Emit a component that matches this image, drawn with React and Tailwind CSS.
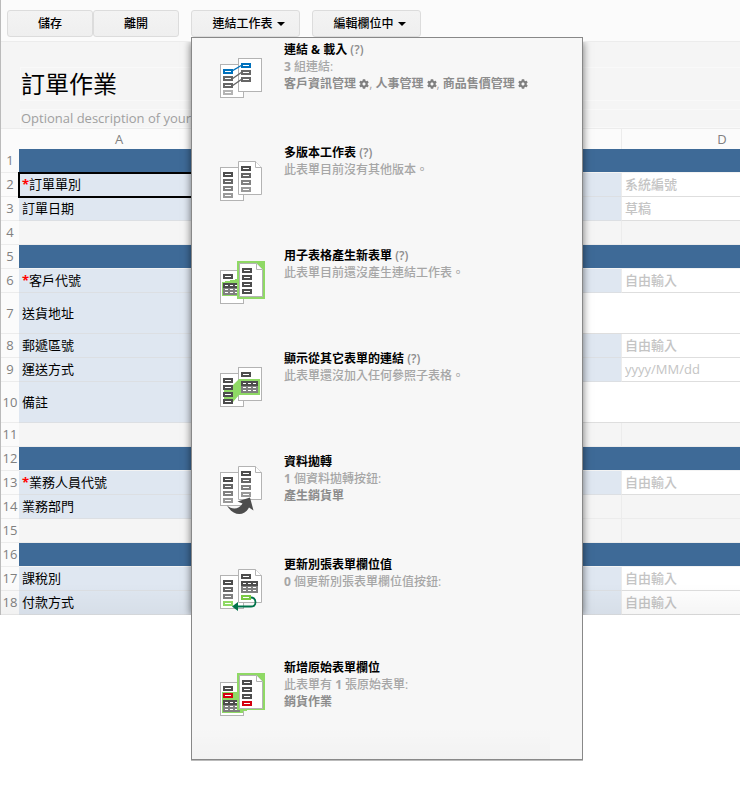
import React from "react";
import { FaCog } from "react-icons/fa";

const SHADES = ["#4d4d4d", "#666666", "#808080", "#999999"];
const BLUE = "#0071bc";
const GREEN = "#8fd965";
const DARK_GREEN = "#00734a";
const RED = "#d4000f";

/* ---------- icon building blocks ---------- */

function Page({ x, y, h = 34, fold = false }) {
  const r = x + 23.5;
  const b = y + h - 0.5;
  const l = x + 0.5;
  const t = y + 0.5;
  if (!fold) {
    return <rect x={l} y={t} width="23" height={h - 1} fill="#fff" stroke="#b3b3b3" />;
  }
  return (
    <g fill="#fff" stroke="#b3b3b3" shapeRendering="geometricPrecision">
      <path d={`M${l} ${t}H${r - 6}L${r} ${t + 6}V${b}H${l}Z`} />
      <path d={`M${r - 6} ${t}V${t + 6}H${r}`} />
    </g>
  );
}

function Bar({ x, y, color = "#4d4d4d" }) {
  return (
    <g>
      <rect x={x} y={y} width="10" height="5" fill={color} />
      <rect x={x + 2} y={y + 2} width="6" height="1" fill="#fff" />
    </g>
  );
}

function Bars({ x, y, colors }) {
  return colors.map((color, i) => <Bar key={i} x={x} y={y + i * 7} color={color} />);
}

function Grid({ x, y }) {
  return (
    <g>
      <rect x={x} y={y} width="17" height="5" fill="#4d4d4d" />
      <rect x={x} y={y + 5} width="17" height="7" fill="#808080" />
      {[2, 6, 9].map((dy) =>
        [2, 7, 12].map((dx) => (
          <rect key={`${dx}-${dy}`} x={x + dx} y={y + dy} width="3" height="1" fill="#fff" />
        ))
      )}
    </g>
  );
}

function IconFrame({ children }) {
  return (
    <svg width="48" height="52" viewBox="0 0 48 52" className="mt-4 shrink-0" shapeRendering="crispEdges" aria-hidden="true">
      {children}
    </svg>
  );
}

const DARK4 = ["#4d4d4d", "#4d4d4d", "#4d4d4d", "#4d4d4d"];

function LinkIcon() {
  return (
    <IconFrame>
      <Page x={0} y={10} />
      <Page x={18} y={4} />
      <g shapeRendering="geometricPrecision" strokeWidth="1.4">
        <path d="M12 17L22 11" stroke={BLUE} />
        <path d="M12 25L22 18M12 32L22 25" stroke="#666" />
      </g>
      <Bars x={3} y={15} colors={[BLUE, "#666666", "#666666", "#b3b3b3"]} />
      <Bars x={21} y={9} colors={[BLUE, "#666666", "#666666"]} />
    </IconFrame>
  );
}

function VersionsIcon() {
  return (
    <IconFrame>
      <Page x={0} y={10} />
      <Page x={18} y={4} fold />
      <Bars x={3} y={15} colors={SHADES} />
      <Bars x={21} y={9} colors={SHADES} />
    </IconFrame>
  );
}

function SubtableIcon() {
  return (
    <IconFrame>
      <Page x={0} y={10} />
      <path d="M2 22L18 19V36H2Z" fill={GREEN} />
      <Bar x={3} y={14} />
      <Grid x={3} y={23} />
      <rect x="17" y="1" width="28" height="38" fill={GREEN} />
      <Page x={19} y={3} fold />
      <Bars x={22} y={8} colors={DARK4} />
    </IconFrame>
  );
}

function ReferenceIcon() {
  return (
    <IconFrame>
      <Page x={0} y={10} />
      <Page x={18} y={4} />
      <path d="M4 24L13 22L19 16H40V32H19L13 39H4Z" fill={GREEN} shapeRendering="geometricPrecision" />
      <Bars x={3} y={15} colors={DARK4} />
      <Bar x={21} y={9} />
      <Grid x={21} y={18} />
    </IconFrame>
  );
}

function TransferIcon() {
  return (
    <IconFrame>
      <Page x={0} y={6} />
      <Page x={18} y={0} fold />
      <Bars x={3} y={11} colors={SHADES} />
      <Bars x={21} y={5} colors={SHADES} />
      <path
        d="M7 39.500C12 44 19 43.500 22.500 37.500L17.500 35.500L30 31.500L33.500 44.500L29 41.500C24 51 13 50 7 39.500Z"
        fill="#4d4d4d"
        shapeRendering="geometricPrecision"
      />
    </IconFrame>
  );
}

function UpdateIcon() {
  return (
    <IconFrame>
      <Page x={0} y={6} />
      <Page x={18} y={0} fold />
      <Bars x={3} y={11} colors={["#4d4d4d", "#666666", "#808080", GREEN]} />
      <Bar x={21} y={5} />
      <Grid x={21} y={12} />
      <Bar x={21} y={26} color="#7ac943" />
      <g shapeRendering="geometricPrecision">
        <path d="M31 28.500C37 29 37 37.500 31 37.500H16" fill="none" stroke={DARK_GREEN} strokeWidth="1.8" />
        <path d="M12 37.500L18 33V42Z" fill={DARK_GREEN} />
      </g>
    </IconFrame>
  );
}

function SourceIcon() {
  return (
    <IconFrame>
      <Page x={0} y={10} />
      <rect x="2" y="20" width="25" height="19" fill={GREEN} />
      <rect x="2" y="39" width="21" height="2" fill={GREEN} />
      <Bar x={3} y={14} />
      <Bar x={3} y={21} color={RED} />
      <Grid x={3} y={28} />
      <rect x="17" y="1" width="28" height="37" fill={GREEN} />
      <Page x={19} y={3} fold />
      <Bars x={22} y={8} colors={["#4d4d4d", "#4d4d4d", "#4d4d4d", RED]} />
    </IconFrame>
  );
}

/* ---------- menu ---------- */

function Gear({ label }) {
  return (
    <button type="button" aria-label={label} className="inline-block align-[-1px] text-[#7f7f7f]">
      <FaCog size={10} />
    </button>
  );
}

function Sheet({ name }) {
  return (
    <>
      <a href="#sheet" className="font-bold text-[#8c8c8c]">{name}</a> <Gear label={name} />
    </>
  );
}

const MENU = [
  {
    Icon: LinkIcon,
    title: "連結 & 載入",
    help: true,
    body: (
      <>
        <p><b>3</b> 組連結:</p>
        <p><Sheet name="客戶資訊管理" />, <Sheet name="人事管理" />, <Sheet name="商品售價管理" /></p>
      </>
    ),
  },
  { Icon: VersionsIcon, title: "多版本工作表", help: true, body: <p>此表單目前沒有其他版本。</p> },
  { Icon: SubtableIcon, title: "用子表格產生新表單", help: true, body: <p>此表單目前還沒產生連結工作表。</p> },
  { Icon: ReferenceIcon, title: "顯示從其它表單的連結", help: true, body: <p>此表單還沒加入任何參照子表格。</p> },
  {
    Icon: TransferIcon,
    title: "資料拋轉",
    body: (
      <>
        <p><b>1</b> 個資料拋轉按鈕:</p>
        <p><a href="#sheet" className="font-bold text-[#8c8c8c]">產生銷貨單</a></p>
      </>
    ),
  },
  { Icon: UpdateIcon, title: "更新別張表單欄位值", body: <p><b>0</b> 個更新別張表單欄位值按鈕:</p> },
  {
    Icon: SourceIcon,
    title: "新增原始表單欄位",
    body: (
      <>
        <p>此表單有 <b>1</b> 張原始表單:</p>
        <p><a href="#sheet" className="font-bold text-[#8c8c8c]">銷貨作業</a></p>
      </>
    ),
  },
];

function LinkMenu() {
  return (
    <div className="absolute left-0 top-full z-20 w-[392px] border border-[#888] bg-[#f7f7f7] shadow-[0_1px_0_#bbb]">
      <ul>
        {MENU.map(({ Icon, title, help, body }) => (
          <li key={title} className="flex h-[103px] gap-4 pl-7">
            <Icon />
            <div className="pt-[3px] text-[12px] leading-[17px] font-medium text-[#a6a6a6]">
              <h2 className="font-bold text-black">
                <a href="#open">{title}</a>
                {help && <a href="#help" className="font-semibold text-[#8c8c8c]"> (?)</a>}
              </h2>
              {body}
            </div>
          </li>
        ))}
      </ul>
      <div className="pointer-events-none absolute bottom-0 left-0 right-8 h-8 bg-linear-to-b from-transparent to-black/2" />
    </div>
  );
}

function ToolButton({ children, caret, className }) {
  return (
    <button
      type="button"
      aria-haspopup={caret ? "menu" : undefined}
      className={`flex h-[27px] items-center justify-center gap-1 rounded-[3px] border border-[#dcdcdc] bg-linear-to-b from-[#f3f3f3] to-[#efefef] text-[12px] font-medium text-black ${caret ? "pl-1.5" : ""} ${className}`}
    >
      {children}
      {caret && (
        <svg width="8" height="4" viewBox="0 0 8 4" aria-hidden="true">
          <path d="M0 0H8L4 4Z" fill="#000" />
        </svg>
      )}
    </button>
  );
}

/* ---------- form grid ---------- */

const ROWS = [
  { band: true },
  { label: "訂單單別", required: true, selected: true, field: "系統編號" },
  { label: "訂單日期", field: "草稿" },
  {},
  { band: true },
  { label: "客戶代號", required: true, field: "自由輸入" },
  { label: "送貨地址", wide: true },
  { label: "郵遞區號", field: "自由輸入" },
  { label: "運送方式", field: "yyyy/MM/dd" },
  { label: "備註", wide: true },
  {},
  { band: true },
  { label: "業務人員代號", required: true, field: "自由輸入" },
  { label: "業務部門" },
  {},
  { band: true },
  { label: "課稅別", field: "自由輸入" },
  { label: "付款方式", field: "自由輸入" },
];

const EMPTY = "border-b border-r border-[#ececec] bg-[#f5f5f5]";
const LABEL = "border-b border-r border-b-[#dcdfe3] border-r-[#ececec] bg-[#dfe7f1]";
const FIELD = "border-b border-r border-[#dedede] bg-white";

function GridRow({ row, number }) {
  const lift = row.wide ? "" : "pb-0.5";
  return (
    <tr className={row.wide ? "h-[41px]" : "h-6"}>
      <th scope="row" className={`border-b border-[#ececec] bg-[#fbfbfb] text-center font-normal text-[#808080] ${lift}`}>
        {number}
      </th>
      {row.band && <td colSpan={4} className="border-b border-[#f3f3f3] bg-[#3e6a97]" />}
      {!row.band && (
        <td className={`${row.label ? LABEL : EMPTY} pl-[3px] ${lift} ${row.selected ? "outline-2 -outline-offset-1 outline-black" : ""}`}>
          {row.required && <b className="text-[#f00]">*</b>}
          {row.label}
        </td>
      )}
      {row.wide && (
        <td colSpan={3} className={FIELD}>
          <input aria-label={row.label} className="w-full bg-transparent px-1 outline-none" />
        </td>
      )}
      {!row.band && !row.wide && (
        <>
          <td className={row.label ? FIELD : EMPTY} />
          <td className={row.field ? LABEL : EMPTY} />
          <td className={`${row.field ? FIELD : EMPTY} ${lift}`}>
            {row.field && (
              <input
                aria-label={`${number} ${row.field}`}
                placeholder={row.field}
                className="block w-full bg-transparent px-[3px] font-medium outline-none placeholder:text-[#c4c4c4]"
              />
            )}
          </td>
        </>
      )}
    </tr>
  );
}

export default function App() {
  return (
    <div lang="zh-Hant" className="min-h-screen overflow-hidden bg-white font-['Open_Sans','Noto_Sans_CJK_TC',sans-serif]">
      <main className="border-l border-[#bbb]">
        <header className="flex h-[42px] items-start gap-3 border-b border-[#ececec] bg-[#fbfbfb] pl-1.5 pt-2.5">
          <div className="flex">
            <ToolButton className="w-[86px]">儲存</ToolButton>
            <ToolButton className="w-[86px]">離開</ToolButton>
          </div>
          <div className="relative">
            <ToolButton caret className="w-[109px]">連結工作表</ToolButton>
            <LinkMenu />
          </div>
          <ToolButton caret className="w-[109px]">編輯欄位中</ToolButton>
        </header>

        <section className="relative overflow-hidden">
          <div className="h-[87px] border-b border-[#ececec] bg-[#f5f5f5] pl-[19px] pt-[25px]">
            <input
              aria-label="表單名稱"
              defaultValue="訂單作業"
              className="block h-[34px] w-full border border-r-0 border-[#f9f9f9] bg-transparent text-[24px] text-black outline-none"
            />
            <input
              aria-label="表單描述"
              placeholder="Optional description of your form"
              className="mt-2 block h-[19px] w-full border border-r-0 border-[#f9f9f9] bg-transparent text-[13px] outline-none placeholder:text-[#a0a0a0]"
            />
          </div>

          <table className="w-[822px] table-fixed border-separate border-spacing-0 text-[13px] leading-[18px] text-black">
            <colgroup>
              <col className="w-[18px]" />
              <col className="w-[201px]" />
              <col className="w-[201px]" />
              <col className="w-[201px]" />
              <col className="w-[201px]" />
            </colgroup>
            <thead>
              <tr className="h-5 bg-[#fbfbfb] text-[#808080]">
                <td />
                <th scope="col" className="border-r border-[#ececec] font-normal">A</th>
                <th scope="col" aria-label="B" className="border-r border-[#ececec]" />
                <th scope="col" aria-label="C" className="border-r border-[#ececec]" />
                <th scope="col" className="border-r border-[#ececec] font-normal">D</th>
              </tr>
            </thead>
            <tbody>
              {ROWS.map((row, i) => (
                <GridRow key={i} row={row} number={i + 1} />
              ))}
            </tbody>
          </table>

          <div className="pointer-events-none absolute inset-x-0 bottom-0 h-8 bg-linear-to-b from-transparent to-black/4" />
          <div className="pointer-events-none absolute inset-y-0 left-[190px] w-[392px] shadow-[0_0_8px_rgba(0,0,0,0.55)]" />
        </section>
      </main>
    </div>
  );
}
